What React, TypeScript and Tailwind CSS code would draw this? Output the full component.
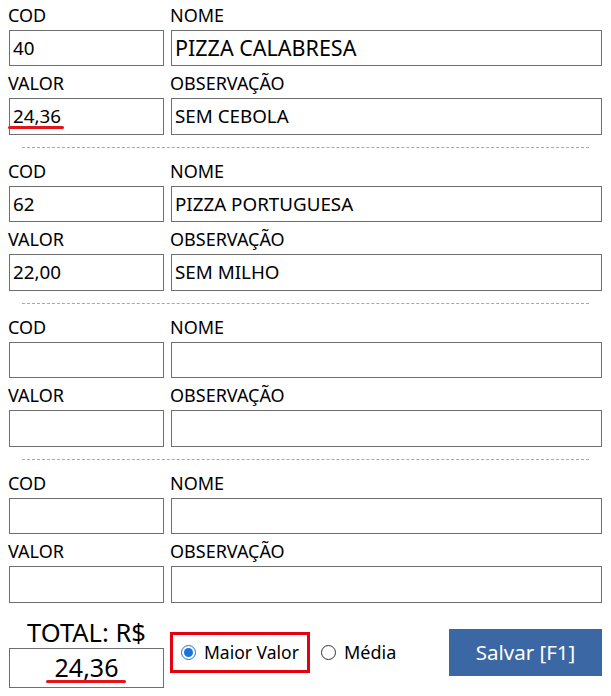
import React from 'react'

type Item = {
  cod: string
  nome: string
  valor: string
  obs: string
  bigNome?: boolean
  markValor?: boolean
}

const items: Item[] = [
  { cod: '40', nome: 'PIZZA CALABRESA', valor: '24,36', obs: 'SEM CEBOLA', bigNome: true, markValor: true },
  { cod: '62', nome: 'PIZZA PORTUGUESA', valor: '22,00', obs: 'SEM MILHO' },
  { cod: '', nome: '', valor: '', obs: '' },
  { cod: '', nome: '', valor: '', obs: '' },
]

const font = { fontFamily: '"Noto Sans", "Open Sans", sans-serif' }

function Box({ children, className = '' }: { children?: React.ReactNode; className?: string }) {
  return (
    <div className={`relative flex items-center border border-[#6f6f6f] bg-white px-[3px] text-[18.8px] text-black ${className}`}>
      {children}
    </div>
  )
}

function Label({ text }: { text: string }) {
  return <div className="h-[20px] text-[18px] leading-[20px] text-black -ml-[1px]">{text}</div>
}

function Block({ item }: { item: Item }) {
  return (
    <div className="grid grid-cols-[155px_431px] gap-x-[7px]">
      <Label text="COD" />
      <Label text="NOME" />
      <Box className="mt-[5px] h-[36px]">{item.cod}</Box>
      <Box className={`mt-[5px] h-[36px] ${item.bigNome ? 'text-[21.5px]' : ''}`}>{item.nome}</Box>
      <div className="mt-[7px]">
        <Label text="VALOR" />
      </div>
      <div className="mt-[7px]">
        <Label text="OBSERVAÇÃO" />
      </div>
      <Box className="mt-[5px] h-[37px]">
        <span className="relative">
          {item.valor}
          {item.markValor && (
            <span className="absolute left-[-5px] right-[-3px] top-[24px] h-[3px] rounded-full bg-[#e3151b]" />
          )}
        </span>
      </Box>
      <Box className="mt-[5px] h-[37px]">{item.obs}</Box>
    </div>
  )
}

export default function App() {
  return (
    <div className="w-[611px] h-[696px] bg-white px-[9px] pt-[5px]" style={font}>
      {items.map((item, i) => (
        <div key={i}>
          <Block item={item} />
          {i < items.length - 1 && (
            <div className="mx-[13px] mt-[12px] mb-[13px] border-t border-dashed border-[#a8a8a8]" />
          )}
        </div>
      ))}

      <div className="mt-[14px] flex items-start">
        <div className="w-[155px] flex flex-col items-center">
          <div className="text-[25.5px] leading-[30px] text-black">TOTAL: R$</div>
          <Box className="mt-[1px] h-[40px] w-[155px] justify-center text-[25px]">
            <span className="relative">
              24,36
              <span className="absolute left-[-9px] right-[-8px] top-[31px] h-[3px] rounded-full bg-[#e3151b]" />
            </span>
          </Box>
        </div>

        <div className="ml-[6px] mt-[15px] flex h-[41px] w-[140px] items-center border-[3px] border-[#e3000f] pl-[8px]">
          <span className="flex h-[15px] w-[15px] items-center justify-center rounded-full border border-[#1a73d9] bg-white">
            <span className="h-[9px] w-[9px] rounded-full bg-[#1a73d9]" />
          </span>
          <span className="ml-[8px] text-[17.5px] text-black">Maior Valor</span>
        </div>

        <div className="ml-[11px] mt-[15px] flex h-[41px] items-center">
          <span className="h-[15px] w-[15px] rounded-full border border-[#333]" />
          <span className="ml-[8px] text-[18px] text-black">Média</span>
        </div>

        <button className="ml-auto mt-[12px] flex h-[47px] w-[153px] items-center justify-center bg-[#3b67a4] text-[20.5px] text-white">
          Salvar [F1]
        </button>
      </div>
    </div>
  )
}
